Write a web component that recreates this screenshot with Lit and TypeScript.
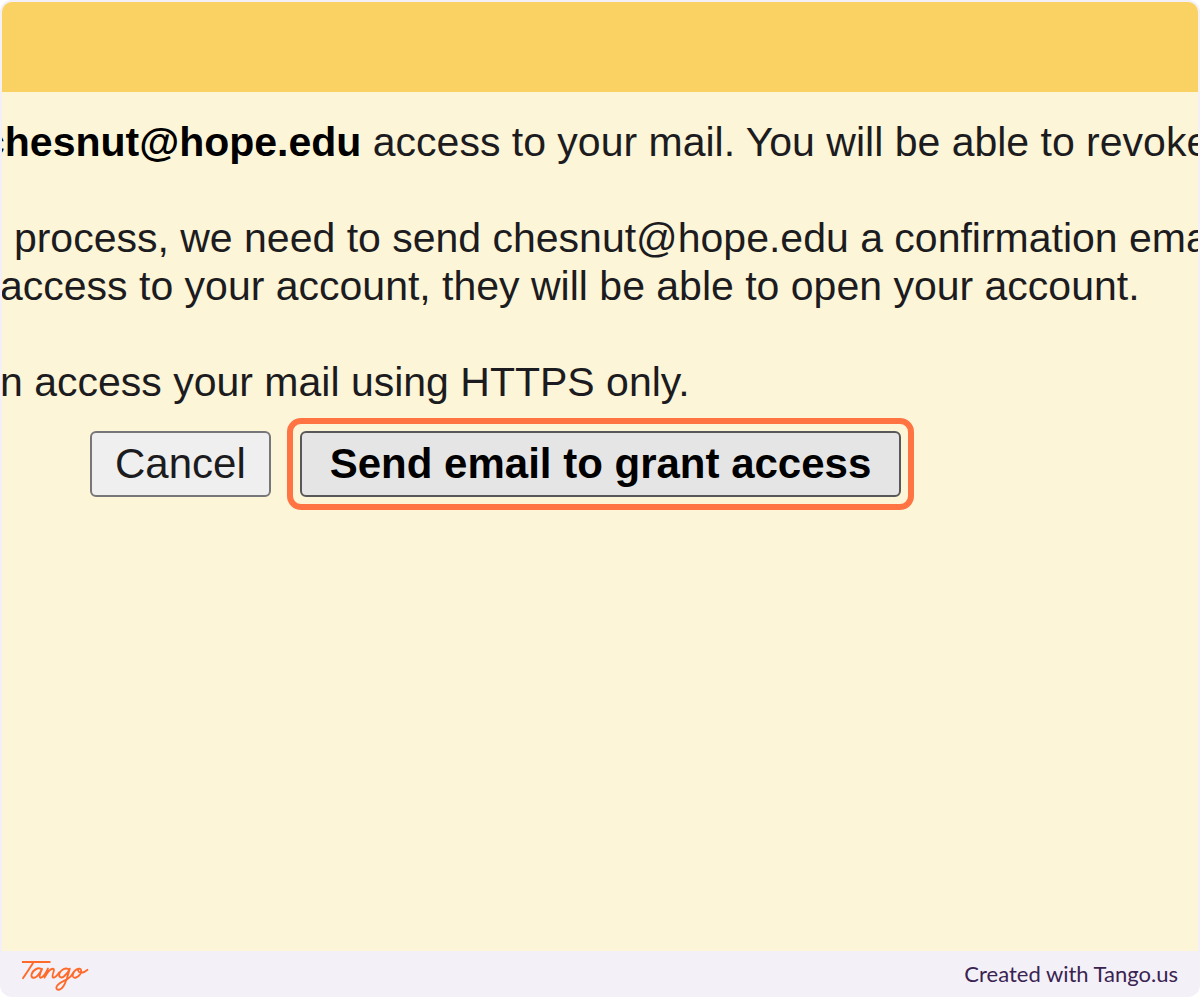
import { LitElement, html, css } from "lit";
import { customElement } from "lit/decorators.js";

@customElement("tango-logo")
class TangoLogo extends LitElement {
  static styles = css`
    :host {
      display: block;
    }
    .mark {
      display: block;
      width: 70px;
      height: 34px;
      fill: none;
      stroke: #ff6a2b;
      stroke-width: 1.8;
      stroke-linecap: round;
      stroke-linejoin: round;
    }
  `;

  render() {
    return html`
      <svg class="mark" viewBox="0 0 70 34" role="img" aria-label="Tango">
        <g transform="scale(1 1.1)">
          <path d="M2 4.6H30.500" stroke-linecap="butt" />
          <path d="M13.500 4.800C10.500 9 7 14 3 19.200" />
          <path
            d="M22 11.500C18.500 8.500 12.500 12 11.500 16C10.800 19.300 14.500 19.800 17 17.600C19.500 15.500 21 13 22 10.800C20.500 14 18.500 18.500 20.500 18.800C23.500 19 26 14.500 28 10.500L24.500 18.700C27 14.500 30.500 10.500 33 10.600C35.800 10.900 31.500 16.500 32.600 18.200C34 20 37.500 16.500 39.500 13.800"
          />
          <path
            d="M49.500 11.600C46 8.800 40.500 11.500 39.300 15.200C38.500 18.700 41.500 19.300 44 17.600C47 15.600 48.800 12.800 49.800 10.600C48.500 15 46.500 22 43.500 26.500C41.300 30 36.500 31 36.300 28C36.200 24.500 42.500 22.500 47 20.300C50.500 18.500 52 16.500 53.500 14"
          />
          <path
            d="M58.500 10.600C55 11 52 15 52.800 17.500C53.800 20 58 18.700 60 15.800C61.800 13 61.500 10.700 59.500 10.600C57.300 10.600 57.500 13.600 60.500 14.200C63.500 14.600 66 13 67.500 11.700"
          />
        </g>
      </svg>
    `;
  }
}

@customElement("app-root")
class AppRoot extends LitElement {
  static styles = css`
    :host {
      display: block;
      background: #ffffff;
      font-family: "Liberation Sans", Arial, sans-serif;
      color: #1c1c20;
    }
    .frame {
      box-sizing: border-box;
      display: flex;
      flex-direction: column;
      min-height: 100vh;
      padding: 2px 2px 0;
      background: #f3f1f7;
      border-radius: 12px;
      overflow: hidden;
    }
    .shot {
      flex: 1;
      display: flex;
      flex-direction: column;
      background: #fdf5d8;
      border-radius: 10px 10px 0 0;
      overflow: hidden;
    }
    .band {
      height: 90px;
      background: #fad163;
    }
    .message {
      margin: 0 0 0 -2px;
      padding-top: 26px;
      font-size: 41px;
      line-height: 48px;
      white-space: nowrap;
    }
    .line {
      display: block;
    }
    .cut {
      margin-left: -18px;
    }
    .gap {
      margin-bottom: 48px;
    }
    .address {
      color: #000000;
    }
    .actions {
      display: flex;
      align-items: center;
      gap: 16px;
      padding: 12px 0 0 88px;
    }
    .button {
      box-sizing: border-box;
      height: 66px;
      margin: 0;
      padding: 0 23px;
      border: 2px solid #77777a;
      border-radius: 6px;
      background: #efefef;
      color: #1c1c20;
      font-family: inherit;
      font-size: 42px;
      line-height: 48px;
      white-space: nowrap;
    }
    .strong {
      border-color: #58585a;
      background: #e5e5e5;
      color: #000000;
      font-weight: 700;
      padding: 0 28px;
    }
    .highlight {
      display: flex;
      padding: 7px;
      border: 6px solid #ff7442;
      border-radius: 14px;
    }
    .footer {
      display: flex;
      align-items: center;
      justify-content: space-between;
      height: 46px;
      padding: 0 20px 0 18px;
    }
    .credit {
      color: #3a2352;
      font-family: Lato, sans-serif;
      font-size: 22px;
      line-height: 28px;
      text-decoration: none;
    }
  `;

  render() {
    return html`
      <div class="frame">
        <main class="shot">
          <div class="band"></div>
          <p class="message">
            <span class="line cut gap"
              ><b class="address">chesnut@hope.edu</b> access to your mail. You will be able to revoke</span
            >
            <span class="line cut">s process, we need to send chesnut@hope.edu a confirmation email</span>
            <span class="line gap">access to your account, they will be able to open your account.</span>
            <span class="line">n access your mail using HTTPS only.</span>
          </p>
          <div class="actions">
            <button class="button" type="button">Cancel</button>
            <div class="highlight">
              <button class="button strong" type="button">Send email to grant access</button>
            </div>
          </div>
        </main>
        <footer class="footer">
          <tango-logo></tango-logo>
          <a class="credit" href="#">Created with Tango.us</a>
        </footer>
      </div>
    `;
  }
}
